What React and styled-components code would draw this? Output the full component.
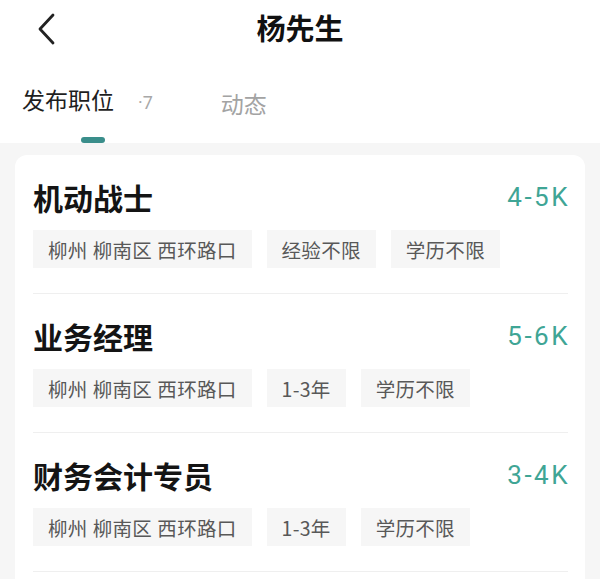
import styled, { createGlobalStyle } from "styled-components";

const GlobalStyle = createGlobalStyle`
    * { box-sizing: border-box; margin: 0; padding: 0; }
    body {
        background: #fff;
        font-family: "Noto Sans CJK SC", "Noto Sans", sans-serif;
    }
`;
const Page = styled.div`
    width: 600px;
    height: 579px;
    overflow: hidden;
    background: #fff;
`;
const Header = styled.header`
    height: 56px;
    display: flex;
    align-items: center;
    justify-content: center;
    position: relative;
`;
const Back = styled.button`
    position: absolute;
    left: 30px;
    top: 10px;
    width: 32px;
    height: 38px;
    border: none;
    background: transparent;
    display: flex;
    align-items: center;
    justify-content: center;
`;
const Title = styled.h1`
    font-size: 29px;
    font-weight: 700;
    color: #111;
    line-height: 1;
    margin-top: -2px;
`;
const Tabs = styled.nav`
    display: flex;
    align-items: flex-end;
    gap: 68px;
    padding: 14px 0 0 22px;
    height: 87px;
`;
const Tab = styled.div`
    display: flex;
    flex-direction: column;
    align-items: center;
    gap: 20px;
`;
const TabLabel = styled.div`
    display: flex;
    align-items: baseline;
    font-size: 23px;
    line-height: 28px;
    color: ${p => p.$active ? "#1e1e1e" : "#a3a3a3"};
    & > span {
        font-family: "Roboto", sans-serif;
        font-size: 18px;
        color: #a8a8a8;
        margin-left: 24px;
    }
`;
const Indicator = styled.div`
    width: 24px;
    height: 6px;
    border-radius: 3px;
    background: ${p => p.$show ? "#3a8e8b" : "transparent"};
    margin-right: ${p => p.$shift || 0}px;
`;
const Body = styled.main`
    background: #f6f6f6;
    padding: 12px 15px 0;
    height: 436px;
`;
const Card = styled.section`
    background: #fff;
    border-radius: 12px;
    padding: 0 17px 40px 18px;
`;
const Job = styled.article`
    padding: 26px 0 25px;
    border-bottom: 1px solid #efefef;
    display: flex;
    flex-direction: column;
    gap: 17px;
`;
const JobTop = styled.div`
    display: flex;
    align-items: center;
    justify-content: space-between;
`;
const JobName = styled.h2`
    font-size: 30px;
    font-weight: 700;
    color: #141414;
    line-height: 32px;
`;
const Salary = styled.span`
    font-family: "Roboto", sans-serif;
    font-size: 26px;
    font-weight: 400;
    color: #3fa595;
    letter-spacing: 2.5px;
    margin-right: -2px;
    line-height: 32px;
`;
const Tags = styled.ul`
    list-style: none;
    display: flex;
    gap: 15px;
`;
const Tag = styled.li`
    height: 38px;
    padding: 0 15px;
    display: flex;
    align-items: center;
    background: #f6f6f6;
    color: #585858;
    font-size: 19.5px;
    letter-spacing: 0.3px;
    word-spacing: 0.5px;
    white-space: pre;
`;

const jobs = [
    { name: "机动战士", salary: "4-5K", tags: ["柳州 柳南区 西环路口", "经验不限", "学历不限"] },
    { name: "业务经理", salary: "5-6K", tags: ["柳州 柳南区 西环路口", "1-3年", "学历不限"] },
    { name: "财务会计专员", salary: "3-4K", tags: ["柳州 柳南区 西环路口", "1-3年", "学历不限"] },
];

export default function App() {
    return <Page>
        <GlobalStyle />
        <Header>
            <Back>
                <svg width="22" height="34" viewBox="0 0 22 34" fill="none">
                    <path d="M18 3L5 17L18 31" stroke="#222" strokeWidth="2.8" strokeLinecap="round" strokeLinejoin="round" />
                </svg>
            </Back>
            <Title>杨先生</Title>
        </Header>
        <Tabs>
            <Tab>
                <TabLabel $active>发布职位<span>·7</span></TabLabel>
                <Indicator $show $shift={-12} />
            </Tab>
            <Tab>
                <TabLabel>动态</TabLabel>
                <Indicator />
            </Tab>
        </Tabs>
        <Body>
            <Card>
                {jobs.map(job => <Job key={job.name}>
                    <JobTop>
                        <JobName>{job.name}</JobName>
                        <Salary>{job.salary}</Salary>
                    </JobTop>
                    <Tags>
                        {job.tags.map(t => <Tag key={t}>{t}</Tag>)}
                    </Tags>
                </Job>)}
            </Card>
        </Body>
    </Page>;
}
